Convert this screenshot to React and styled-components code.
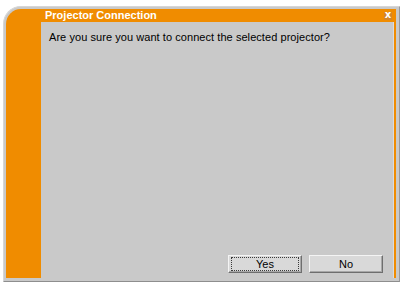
import React from 'react';
import styled, { createGlobalStyle } from 'styled-components';

const GlobalStyle = createGlobalStyle`
  body {
    margin: 0;
    background: #ffffff;
    font-family: "Liberation Sans", Arial, sans-serif;
  }
`;

const Page = styled.div`
  width: 401px;
  height: 284px;
  padding: 6px 0 0 3px;
  box-sizing: border-box;
`;

const Frame = styled.div`
  width: 397px;
  height: 276px;
  box-sizing: border-box;
  background: #c9c9c9;
  border-top: 1px solid #d6d6d6;
  border-left: 1px solid #d6d6d6;
  border-right: 1px solid #9a9a9a;
  border-bottom: 1px solid #8e8e8e;
  border-top-left-radius: 18px;
  padding: 2px 3px 3px 2px;
`;

const Inner = styled.div`
  height: 100%;
  display: grid;
  grid-template-columns: 35px 1fr;
  grid-template-rows: 13px 1fr;
  background: #f08c00;
  border-top-left-radius: 15px;
`;

const TitleBar = styled.div`
  grid-column: 2;
  grid-row: 1;
  display: flex;
  align-items: center;
  justify-content: space-between;
  padding: 0 4px 0 4px;
  color: #ffffff;
  font-size: 11px;
  font-weight: bold;
  line-height: 13px;
`;

const CloseBox = styled.span`
  width: 8px;
  height: 8px;
  display: flex;
  align-items: center;
  justify-content: center;
  background: #d4862a;
  color: #ffffff;
  font-family: "DejaVu Sans", sans-serif;
  font-size: 10px;
  font-weight: bold;
  line-height: 8px;
  padding-bottom: 1px;
  box-sizing: border-box;
`;

const Content = styled.div`
  grid-column: 2;
  grid-row: 2;
  background: #c9c9c9;
  border-right: 1px solid #dcdcdc;
  margin-right: 2px;
  display: flex;
  flex-direction: column;
  justify-content: space-between;
  padding: 9px 10px 5px 8px;
`;

const Message = styled.p`
  margin: 0;
  font-size: 11px;
  line-height: 13px;
  letter-spacing: 0.06px;
  color: #000000;
`;

const ButtonRow = styled.div`
  display: flex;
  justify-content: flex-end;
  gap: 7px;
`;

const Button = styled.button`
  width: 74px;
  height: 18px;
  padding: 0;
  background: #d9d9d9;
  border-top: 1px solid #f4f4f4;
  border-left: 1px solid #f4f4f4;
  border-right: 1px solid #6e6e6e;
  border-bottom: 1px solid #6e6e6e;
  box-shadow: inset -1px -1px 0 #a8a8a8;
  font-family: "Liberation Sans", Arial, sans-serif;
  font-size: 11px;
  color: #000000;
  display: flex;
  align-items: center;
  justify-content: center;
`;

const FocusRing = styled.span`
  display: flex;
  align-items: center;
  justify-content: center;
  width: 66px;
  height: 12px;
  border: 1px dotted ${(p) => (p.$focused ? '#3a3a3a' : 'transparent')};
`;

export default function App() {
  return (
    <>
      <GlobalStyle />
      <Page>
        <Frame>
          <Inner>
            <TitleBar>
              <span>Projector Connection</span>
              <CloseBox>x</CloseBox>
            </TitleBar>
            <Content>
              <Message>Are you sure you want to connect the selected projector?</Message>
              <ButtonRow>
                <Button>
                  <FocusRing $focused>Yes</FocusRing>
                </Button>
                <Button>
                  <FocusRing>No</FocusRing>
                </Button>
              </ButtonRow>
            </Content>
          </Inner>
        </Frame>
      </Page>
    </>
  );
}
